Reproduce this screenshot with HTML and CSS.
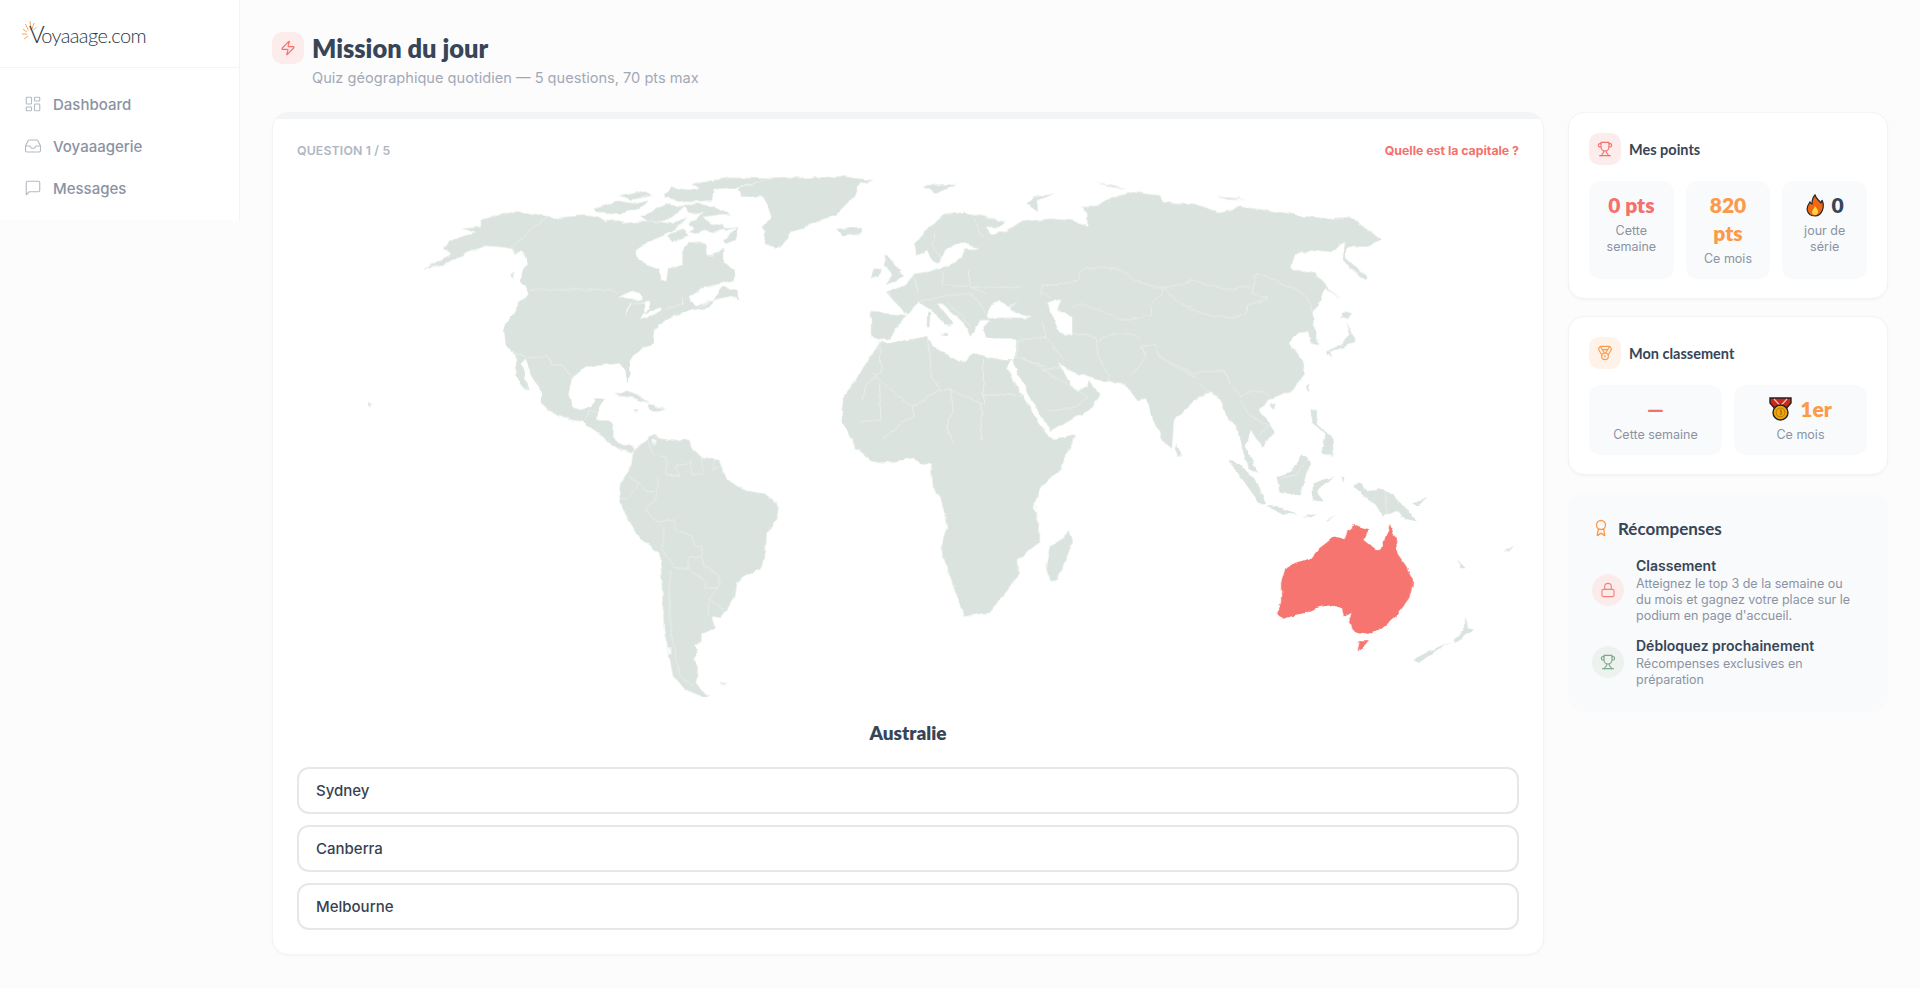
FILE: index.html
```html
<!DOCTYPE html>
<html lang="fr">
<head>
    <meta charset="UTF-8">
    <title>Mission du jour - Voyaaage.com</title>
    <link rel="stylesheet" href="styles.css">
</head>
<body>
    <aside class="sidebar">
        <div class="logo">
            <svg class="logo-sun" viewBox="0 0 16 22" fill="none" stroke="#f9a65a" stroke-width="1">
                <path d="M9 10 8 1M6.5 10.5 3.5 4M5 12 1 9M5 14H0M6 16l-4 3M10 9l2-6M11.5 10l3-3"/>
            </svg>
            <span class="logo-text"><span class="logo-v">V</span>oyaaage.com</span>
        </div>
        <nav class="nav">
            <a class="nav-item">
                <svg class="nav-icon" viewBox="0 0 24 24"><rect x="3" y="3" width="7" height="9" rx="1"/><rect x="14" y="3" width="7" height="5" rx="1"/><rect x="14" y="12" width="7" height="9" rx="1"/><rect x="3" y="16" width="7" height="5" rx="1"/></svg>
                Dashboard
            </a>
            <a class="nav-item">
                <svg class="nav-icon" viewBox="0 0 24 24"><polyline points="22 12 16 12 14 15 10 15 8 12 2 12"/><path d="M5.45 5.11 2 12v6a2 2 0 0 0 2 2h16a2 2 0 0 0 2-2v-6l-3.45-6.89A2 2 0 0 0 16.76 4H7.24a2 2 0 0 0-1.79 1.11z"/></svg>
                Voyaaagerie
            </a>
            <a class="nav-item">
                <svg class="nav-icon" viewBox="0 0 24 24"><path d="M21 15a2 2 0 0 1-2 2H7l-4 4V5a2 2 0 0 1 2-2h14a2 2 0 0 1 2 2z"/></svg>
                Messages
            </a>
        </nav>
    </aside>

    <main class="main">
        <header class="page-head">
            <div class="page-title">
                <span class="icon-box icon-red">
                    <svg class="icon" viewBox="0 0 24 24"><path d="M4 14a1 1 0 0 1-.78-1.63l9.9-10.2a.5.5 0 0 1 .86.46l-1.92 6.02A1 1 0 0 0 13 10h7a1 1 0 0 1 .78 1.63l-9.9 10.2a.5.5 0 0 1-.86-.46l1.92-6.02A1 1 0 0 0 11 14z"/></svg>
                </span>
                <h1>Mission du jour</h1>
            </div>
            <p class="subtitle">Quiz géographique quotidien — 5 questions, 70 pts max</p>
        </header>

        <div class="content">
            <section class="quiz-card">
                <div class="progress"></div>
                <div class="quiz-body">
                    <div class="quiz-top">
                        <span class="quiz-count">QUESTION 1 / 5</span>
                        <span class="quiz-ask">Quelle est la capitale ?</span>
                    </div>

                    <svg class="map" viewBox="296 170 1224 530">
                        <defs>
                            <filter id="coast" x="0" y="0" width="100%" height="100%" filterUnits="objectBoundingBox">
                                <feTurbulence type="fractalNoise" baseFrequency="0.11" numOctaves="2" seed="4"/>
                                <feDisplacementMap in="SourceGraphic" scale="4.5" xChannelSelector="R" yChannelSelector="G"/>
                            </filter>
                        </defs>
                        <g class="map-world">
                        <!-- Amerique du Nord -->
                        <g transform="translate(280 100) scale(.40816 .33333)">
                            <path class="land" d="M345 508 400 490 440 470 470 450 500 437 540 440 565 445 575 460 590 450 600 465 605 490 592 510 588 545 600 560 607 578 600 590 585 605 570 640 552 670 547 690 552 740 575 760 578 810 575 825 590 850 608 875 600 840 590 790 600 775 620 840 640 880 640 910 660 935 710 958 740 965 760 985 800 1020 830 1045 860 1060 865 1040 835 1035 815 1010 815 965 790 958 775 960 780 925 795 895 770 895 760 920 735 930 715 920 705 880 715 830 745 800 790 795 830 790 845 810 850 850 858 820 855 780 880 750 912 730 915 690 945 655 975 645 1010 630 1060 600 1015 618 1000 590 1030 565 1110 540 1115 522 1110 505 1085 485 1085 445 1060 465 1045 465 1040 430 1000 425 985 460 985 490 950 505 945 540 930 540 928 505 905 495 875 480 870 455 900 425 940 405 975 380 1000 350 960 370 930 365 905 365 870 365 830 370 800 365 780 350 745 345 700 350 670 355 655 347 580 333 540 343 490 358 490 380 445 385 475 398 440 410 410 425 400 445 420 460z"/>
                            <path class="land" d="M1125 378 1090 395 1080 370 1050 375 1035 350 1065 345 1105 345 1060 318 1020 310 985 315 1000 340 1040 335 1010 360 1000 375 1060 395z"/>
                            <path class="land" d="M1085 420 1125 378 1115 420 1090 430zM960 395 985 385 1000 405 960 425 950 410z"/>
                            <path class="land" d="M1060 600 1085 560 1120 570 1125 595 1095 590zM1010 630 1065 600 1050 622 1015 632z"/>
                            <path class="land" d="M770 325 830 302 870 310 900 300 880 325 830 340 775 335zM830 285 880 272 915 285 860 298zM955 262 1000 268 1065 262 1060 300 990 305 940 290zM1010 250 1100 232 1200 235 1120 262 1030 268zM800 362 840 360 830 372 805 370zM880 350 945 312 990 318 950 360 900 365zM1040 360 1060 375 1020 400 1000 395z"/>
                            <path class="land" d="M1120 265 1200 235 1290 232 1380 228 1455 240 1420 250 1405 290 1380 320 1360 345 1310 365 1280 385 1250 395 1230 435 1215 445 1190 430 1180 380 1205 345 1185 290 1130 285z"/>
                            <path class="land" d="M1365 385 1425 380 1425 400 1380 408z"/>
                            <path class="land" d="M815 885 850 872 880 890 905 910 860 892zM900 915 945 925 925 932 900 930zM865 928 880 930 870 935z"/>
                            <path class="land" d="M215 905 225 915 218 922zM565 520 575 515 570 535z"/>
                            <path class="sea" d="M825 595 860 572 880 578 885 600 860 598 840 590zM838 655 855 612 905 605 905 625 880 655 905 652 935 628 930 622 895 640 890 610 860 612 845 640zM1030 590 1058 590 1040 605z"/>
                            <path class="border" d="M610 568H815L825 580M655 347 565 440 575 455 600 465M575 760 615 775 655 770 665 795 690 795 715 835M745 965 755 935 780 935M770 985 785 958M985 590 985 610 940 630"/>
                        </g>

                        <!-- Amerique du Sud et Afrique australe -->
                        <g transform="translate(560 420) scale(.35714 .33333)">
                            <path class="land" d="M60 0 100 25 125 60 170 92 205 90 190 75 165 80 145 55 150 10 110 0z"/>
                            <path class="land" d="M205 90 245 55 262 42 275 55 320 62 360 62 370 85 400 115 445 120 465 175 490 195 520 212 565 220 605 245 613 275 605 305 578 345 575 400 560 450 510 470 495 490 490 530 460 580 450 595 425 590 435 620 395 642 395 665 375 680 385 690 370 720 385 745 380 790 395 810 420 828 400 832 350 810 315 770 305 710 290 630 285 520 280 400 220 355 165 250 170 190 190 155 200 120z"/>
                            <path class="land" d="M1425 330 1435 370 1395 480 1375 485 1362 445 1375 380 1410 355zM445 790 468 790 455 795z"/>
                            <path class="sea" d="M258 58 266 55 262 78zM1262 185 1280 190 1270 215 1255 210zM1236 225 1242 225 1250 285 1244 285zM1278 300 1285 300 1288 350 1282 350zM302 682 310 684 310 704 304 702z"/>
                            <path class="border" d="M275 170 270 230 240 270 270 310 320 300 320 325 370 350 375 375 395 380 400 440 440 465 445 490 415 540 460 570M245 60 255 100 295 115 295 160 330 170 325 140 365 125 370 165 400 160 395 115M430 120 425 155 450 135M190 170 220 190 190 235 170 240M220 190 240 215 270 215M290 320 285 390 320 445 355 445 360 415 395 412M355 445 405 485 405 505 440 505M310 450 305 510 310 640 335 770 375 800M415 540 415 585"/>
                            <path class="border" d="M1105 150 1130 130 1210 125 1250 140 1240 205 1240 260 1235 340 1180 315 1160 270 1115 275 1100 245M1070 255 1110 255 1165 315 1160 360 1170 390 1065 385M1130 395 1195 395M1150 400 1140 510 1190 485 1225 445 1195 395M1100 515 1135 525 1140 495M1285 200 1330 240 1340 310 1285 325 1240 300M1285 200 1290 130 1350 140 1350 200M1290 130 1270 90 1300 40 1360 30M1285 325 1295 380 1240 365M1160 360 1210 385 1270 350M1200 395 1220 440 1260 440 1265 380M1205 535 1222 525 1212 545zM1242 490 1252 490 1248 505zM990 30 1085 30 1090 70 1040 125 1000 110 975 110 975 50M920 60 920 125M950 55 955 110M965 55 970 110M870 65 880 130M1045 160 1090 160 1085 210 1105 210 1095 245M1165 40 1190 85 1270 75 1280 40"/>
                        </g>

                        <!-- Afrique -->
                        <path class="land" d="M880 342 868 360 843 397 841 420 855 447 874 463 892 462 914 458 921 463 931 465 933 487 942 503 947 527 940 548 949 573 958 600 964 617 989 613 1006 593 1019 575 1017 560 1039 543 1039 523 1033 507 1042 487 1060 470 1074 440 1076 434 1053 440 1046 433 1027 403 1007 367 1014 360 1003 360 973 353 964 362 934 347 927 336 895 342z"/>

                        <!-- Eurasie -->
                        <g transform="translate(860 170) scale(.43367 .33333)">
                            <path class="land" d="M25 425 110 435 80 395 60 365 105 345 125 310 155 305 180 295 205 285 235 265 240 235 275 235 232 215 200 235 180 280 165 270 155 240 130 255 125 215 150 180 190 135 240 125 290 140 335 155 325 170 290 170 300 190 335 185 370 155 440 145 490 150 525 170 525 130 510 110 545 110 575 85 630 65 690 75 700 95 770 100 830 125 880 110 970 125 1010 135 1080 145 1130 140 1180 185 1205 210 1170 230 1125 230 1120 260 1170 320 1165 330 1130 290 1115 265 1120 215 1085 245 1060 240 1005 250 995 295 1050 310 1075 345 1060 400 1045 430 1050 480 1060 525 1040 520 1035 480 1010 490 990 520 1025 570 1025 610 1000 660 960 680 945 690 920 720 958 785 930 830 900 780 890 830 920 910 900 900 880 830 870 770 850 745 830 690 810 665 785 680 755 715 725 750 720 840 700 810 680 760 660 685 640 690 610 640 570 635 535 625 490 605 460 580 485 640 500 665 525 650 528 630 555 675 530 720 500 740 440 785 425 750 400 700 360 600 355 570 362 505 290 505 285 470 300 450 275 450 255 500 240 460 190 400 180 400 215 460 200 465 170 425 135 395 100 445 70 505 45 510 25 495z"/>
                            <path class="land" d="M60 255 75 270 100 320 60 345 75 310 55 290zM30 300 50 295 45 320 25 325zM1115 430 1140 425 1125 445 1110 440zM1120 455 1145 510 1120 530 1085 545 1090 565 1075 545 1115 520 1130 490zM730 820 742 850 735 862 727 840zM1030 650 1040 640 1035 670zM945 705 960 700 955 720zM1040 720 1055 720 1055 760 1090 800 1095 860 1065 850 1075 790 1045 760zM1050 305 1108 390 1070 345zM155 425 162 425 160 470 154 470zM185 490 205 488 200 500zM145 45 225 40 175 70zM385 100 400 80 450 70 410 90 410 125zM545 35 620 55 580 50zM825 78 895 88 850 88z"/>
                            <path class="sea" d="M295 445 300 410 320 390 345 410 370 388 345 415 395 445 340 442zM430 400 465 385 455 420 490 440 490 495 460 490 450 450zM340 585 360 605 355 570z"/>
                            <path class="border" d="M420 345 500 335 510 300 560 290 605 300 640 335 700 355 770 330 855 360 910 345 915 310 960 330 1030 375 1040 400 1045 430M700 355 740 400 790 430 860 445 890 430 895 405 940 385 905 370 910 345M420 345 420 370 440 385M490 410 510 400 570 430 600 450 675 435 670 405 695 375 700 355M490 490 545 500 550 560 575 620 570 635M420 450 430 500 470 570M630 610 660 560 650 530 680 520 690 560 770 610 840 600 855 640 880 680 915 660 950 680M550 510 590 490 630 490 650 510M710 580 775 620M780 640 810 670M880 690 895 730 940 770 920 800"/>
                            <path class="border" d="M175 180 165 225 190 270M260 140 285 205M250 300 255 350 370 350M135 370 125 320M190 300 190 345 250 345M135 395 185 380 250 370 280 400 295 440M200 400 240 440 255 470M255 350 290 370M430 500 365 510 360 560 430 590M375 560 525 680 500 710 435 725M420 600 465 590"/>
                            <path class="border" d="M155 498 165 620 185 658 120 710 25 610M285 565 285 700M285 675 380 675M210 660 215 720 200 770 215 820M185 658 210 660 280 700 280 810M120 710 125 740 95 760 50 810M45 640 48 750 0 755"/>
                        </g>
                        <path class="border" d="M880 343 881 372 866 385 862 400"/>

                        <!-- Oceanie -->
                        <g transform="translate(1200 440) scale(.33333)">
                            <path class="land" d="M88 62 120 70 175 130 200 190 180 190 130 120zM195 195 250 205 295 225 245 220zM232 110 275 95 310 45 335 65 320 105 300 170 240 155zM340 130 400 110 355 150 375 185 340 185zM460 135 490 130 505 155 540 145 580 165 620 205 655 248 620 240 590 215 550 230 530 195 490 165zM795 530 805 565 825 570 770 610 760 605 795 570zM755 605 700 640 660 670 640 660 690 635zM775 360 800 385 785 385zM915 335 945 318 930 335zM380 240 415 222 385 242zM310 228 355 222 335 232zM640 195 685 170 665 195zM425 105 435 110 432 130z"/>
                            <path class="border" d="M562 158V228M240 115 290 105 315 75"/>
                            <path class="target" d="M465 255 510 268 495 300 535 332 550 320 572 252 590 300 595 345 620 380 643 425 630 475 590 530 550 565 505 583 480 578 460 570 450 535 460 515 430 530 425 505 400 495 350 505 320 520 290 525 255 537 232 525 245 490 245 430 258 385 290 368 335 355 360 325 405 290 435 298 445 270z"/>
                            <path class="target" d="M478 605 512 605 490 630 472 637z"/>
                        </g>
                        </g>
                    </svg>

                    <h2 class="place">Australie</h2>
                    <div class="options">
                        <button class="option">Sydney</button>
                        <button class="option">Canberra</button>
                        <button class="option">Melbourne</button>
                    </div>
                </div>
            </section>

            <div class="side">
                <section class="panel">
                    <div class="panel-head">
                        <span class="icon-box icon-red">
                            <svg class="icon" viewBox="0 0 24 24"><path d="M6 9H4.5a2.5 2.5 0 0 1 0-5H6"/><path d="M18 9h1.5a2.5 2.5 0 0 0 0-5H18"/><path d="M4 22h16"/><path d="M10 14.66V17c0 .55-.47.98-.97 1.21C7.85 18.75 7 20.24 7 22"/><path d="M14 14.66V17c0 .55.47.98.97 1.21C16.15 18.75 17 20.24 17 22"/><path d="M18 2H6v7a6 6 0 0 0 12 0V2Z"/></svg>
                        </span>
                        <h3>Mes points</h3>
                    </div>
                    <div class="stats stats-3">
                        <div class="stat">
                            <div class="stat-value red">0 pts</div>
                            <div class="stat-label">Cette semaine</div>
                        </div>
                        <div class="stat">
                            <div class="stat-value orange">820 pts</div>
                            <div class="stat-label">Ce mois</div>
                        </div>
                        <div class="stat">
                            <div class="stat-value dark">
                                <svg class="emoji-fire" viewBox="0 0 18 23"><path d="M9 1C10 5 13 6 15 9 15.5 8 16 7 16 6 17.5 9 17.5 13 16.5 16 15 20 12 22 9 22 5 22 2 20 1.2 16 .5 12 3 10 4 8 4.5 9 5 10 6 10 6 7 6 4 9 1Z" fill="#f5670f" stroke="#25262b" stroke-width="1.2"/><path d="M9 12C10 14 12 15 12 18 12 20 10.5 21 9 21 7.5 21 6 20 6 18 6 16 8 15 9 12Z" fill="#ffd54a"/></svg>
                                0
                            </div>
                            <div class="stat-label">jour de série</div>
                        </div>
                    </div>
                </section>

                <section class="panel">
                    <div class="panel-head">
                        <span class="icon-box icon-orange">
                            <svg class="icon" viewBox="0 0 24 24"><path d="M7.21 15 2.66 7.14a2 2 0 0 1 .13-2.2L4.4 2.8A2 2 0 0 1 6 2h12a2 2 0 0 1 1.6.8l1.6 2.14a2 2 0 0 1 .14 2.2L16.79 15"/><path d="M11 12 5.12 2.2"/><path d="m13 12 5.88-9.8"/><path d="M8 7h8"/><circle cx="12" cy="17" r="5"/><path d="M12 18v-2h-.5"/></svg>
                        </span>
                        <h3>Mon classement</h3>
                    </div>
                    <div class="stats stats-2">
                        <div class="stat stat-rank">
                            <div class="stat-value red">—</div>
                            <div class="stat-label">Cette semaine</div>
                        </div>
                        <div class="stat stat-rank">
                            <div class="stat-value orange">
                                <svg class="emoji-medal" viewBox="0 0 23 24"><path d="M1 1H22V6L15 14H8L1 6Z" fill="#c9281e" stroke="#222" stroke-width="1.4"/><path d="M5 2 11.5 9 18 2" fill="none" stroke="#f3c3a8" stroke-width="1.2"/><circle cx="11.5" cy="15.5" r="7.5" fill="#eea40c" stroke="#222" stroke-width="1.4"/><circle cx="11.5" cy="15.5" r="4.4" fill="none" stroke="#b97a06"/><path d="M11 13.5 12 13V18" fill="none" stroke="#8a5a04"/></svg>
                                1er
                            </div>
                            <div class="stat-label">Ce mois</div>
                        </div>
                    </div>
                </section>

                <section class="rewards">
                    <div class="rewards-head">
                        <svg class="icon-award" viewBox="0 0 24 24"><path d="m15.477 12.89 1.515 8.526a.5.5 0 0 1-.81.47l-3.58-2.687a1 1 0 0 0-1.197 0l-3.586 2.686a.5.5 0 0 1-.81-.469l1.514-8.526"/><circle cx="12" cy="8" r="6"/></svg>
                        <h3>Récompenses</h3>
                    </div>
                    <div class="reward">
                        <span class="reward-icon reward-red">
                            <svg class="icon" viewBox="0 0 24 24"><rect x="3" y="11" width="18" height="11" rx="2"/><path d="M7 11V7a5 5 0 0 1 10 0v4"/></svg>
                        </span>
                        <div class="reward-text">
                            <h4>Classement</h4>
                            <p>Atteignez le top 3 de la semaine ou du mois et gagnez votre place sur le podium en page d'accueil.</p>
                        </div>
                    </div>
                    <div class="reward">
                        <span class="reward-icon reward-green">
                            <svg class="icon" viewBox="0 0 24 24"><path d="M6 9H4.5a2.5 2.5 0 0 1 0-5H6"/><path d="M18 9h1.5a2.5 2.5 0 0 0 0-5H18"/><path d="M4 22h16"/><path d="M10 14.66V17c0 .55-.47.98-.97 1.21C7.85 18.75 7 20.24 7 22"/><path d="M14 14.66V17c0 .55.47.98.97 1.21C16.15 18.75 17 20.24 17 22"/><path d="M18 2H6v7a6 6 0 0 0 12 0V2Z"/></svg>
                        </span>
                        <div class="reward-text">
                            <h4>Débloquez prochainement</h4>
                            <p>Récompenses exclusives en préparation</p>
                        </div>
                    </div>
                </section>
            </div>
        </div>
    </main>
</body>
</html>
```

FILE: styles.css
```css
* {
    box-sizing: border-box;
}

body {
    margin: 0;
    min-height: 988px;
    display: flex;
    align-items: flex-start;
    background: #fcfcfd;
    color: #374151;
    font-family: Inter, "Noto Sans", sans-serif;
}

h1, h2, h3, h4, p {
    margin: 0;
}

/* Sidebar */
.sidebar {
    width: 240px;
    height: 220px;
    flex-shrink: 0;
    background: #fff;
    border-right: 1px solid #f3f4f6;
}

.logo {
    height: 68px;
    display: flex;
    align-items: center;
    padding-left: 22px;
    border-bottom: 1px solid #f3f4f6;
}

.logo-sun {
    width: 16px;
    height: 22px;
    margin-right: -9px;
    margin-top: -6px;
}

.logo-text {
    font-family: Lato, sans-serif;
    font-weight: 300;
    font-size: 20px;
    letter-spacing: -0.6px;
    color: #2b3645;
}

.logo-v {
    font-size: 24px;
    margin-right: -3px;
}

.nav {
    padding-top: 15px;
}

.nav-item {
    height: 42px;
    display: flex;
    align-items: center;
    gap: 11px;
    padding-left: 24px;
    font-size: 15px;
    font-weight: 500;
    color: #8b93a3;
}

.nav-icon {
    width: 18px;
    height: 18px;
    fill: none;
    stroke: #b4bbc5;
    stroke-width: 1.5;
    stroke-linecap: round;
    stroke-linejoin: round;
}

/* Main */
.main {
    flex: 1;
    padding: 32px;
}

.page-title {
    display: flex;
    align-items: center;
    gap: 8px;
}

h1 {
    font-family: Lato, sans-serif;
    font-size: 25.4px;
    font-weight: 800;
    line-height: 32px;
    color: #374557;
}

.subtitle {
    margin: 4px 0 23px 40px;
    font-size: 14.6px;
    line-height: 21px;
    color: #a2a9b5;
}

.icon-box {
    width: 32px;
    height: 32px;
    flex-shrink: 0;
    display: flex;
    align-items: center;
    justify-content: center;
    border-radius: 10px;
}

.icon {
    width: 16px;
    height: 16px;
    fill: none;
    stroke: currentColor;
    stroke-width: 1.7;
    stroke-linecap: round;
    stroke-linejoin: round;
}

.icon-red {
    background: #fdecec;
    color: #f4716b;
}

.icon-orange {
    background: #fff3e9;
    color: #fb9a4b;
}

.content {
    display: flex;
    align-items: flex-start;
    gap: 24px;
}

/* Quiz */
.quiz-card {
    flex: 1;
    overflow: hidden;
    background: #fff;
    border: 1px solid #f3f4f6;
    border-radius: 16px;
    box-shadow: 0 1px 3px rgba(0, 0, 0, 0.03);
}

.progress {
    height: 6px;
    background: #f3f4f6;
}

.quiz-body {
    padding: 24px 24px 24px;
}

.quiz-top {
    display: flex;
    justify-content: space-between;
    line-height: 16px;
    font-size: 12.3px;
}

.quiz-count {
    font-weight: 600;
    letter-spacing: 0.15px;
    color: #b0b7c3;
}

.quiz-ask {
    font-weight: 700;
    color: #f4716b;
}

.map {
    display: block;
    width: 100%;
    height: 530px;
    margin-top: 11px;
}

.map-world {
    filter: url(#coast);
}

.land {
    fill: #dbe3df;
}

.sea {
    fill: #fff;
}

.border {
    fill: none;
    stroke: #eef2ef;
    stroke-width: 0.8;
    vector-effect: non-scaling-stroke;
}

.target {
    fill: #f6756f;
}

.place {
    margin: 21px 0 22px;
    text-align: center;
    font-family: Lato, sans-serif;
    font-size: 19px;
    font-weight: 800;
    line-height: 24px;
    color: #374557;
}

.options {
    display: flex;
    flex-direction: column;
    gap: 11px;
}

.option {
    height: 47px;
    padding: 0 17px;
    text-align: left;
    background: #fff;
    border: 2px solid #e5e7eb;
    border-radius: 12px;
    font-family: inherit;
    font-size: 15px;
    font-weight: 500;
    color: #374151;
}

/* Right column */
.side {
    width: 320px;
    flex-shrink: 0;
    display: flex;
    flex-direction: column;
    gap: 17px;
}

.panel {
    padding: 20px 20px 19px;
    background: #fff;
    border: 1px solid #f3f4f6;
    border-radius: 16px;
    box-shadow: 0 1px 3px rgba(0, 0, 0, 0.04);
}

.panel-head {
    display: flex;
    align-items: center;
    gap: 8px;
    margin-bottom: 16px;
}

.panel-head h3 {
    font-family: Lato, sans-serif;
    font-size: 14.5px;
    font-weight: 700;
    color: #374557;
}

.stats {
    display: grid;
    gap: 12px;
}

.stats-3 {
    grid-template-columns: repeat(3, 1fr);
}

.stats-2 {
    grid-template-columns: repeat(2, 1fr);
}

.stat {
    padding: 10px 8px 12px;
    min-height: 98px;
    text-align: center;
    background: #f9fafb;
    border-radius: 12px;
}

.stat-rank {
    min-height: 70px;
}

.stat-value {
    display: flex;
    flex-wrap: wrap;
    align-items: center;
    justify-content: center;
    gap: 0 8px;
    font-family: Lato, sans-serif;
    font-size: 21px;
    font-weight: 800;
    line-height: 28px;
}

.stat:nth-child(2) .stat-value {
    padding: 0 10px;
}

.red {
    color: #f4716b;
}

.orange {
    color: #fb9a4b;
}

.dark {
    color: #374557;
}

.stat-label {
    margin-top: 4px;
    font-size: 12.5px;
    line-height: 16px;
    color: #8b93a3;
}

.emoji-fire {
    width: 18px;
    height: 23px;
}

.emoji-medal {
    width: 23px;
    height: 24px;
}

/* Rewards */
.rewards {
    padding: 24px;
    background: #f9fafb;
    border-radius: 16px;
}

.rewards-head {
    height: 24px;
    display: flex;
    align-items: center;
    gap: 8px;
    margin-bottom: 16px;
}

.rewards-head h3 {
    font-family: Lato, sans-serif;
    font-size: 17px;
    font-weight: 700;
    color: #374557;
}

.icon-award {
    width: 18px;
    height: 18px;
    fill: none;
    stroke: #fb9a4b;
    stroke-width: 1.8;
    stroke-linecap: round;
    stroke-linejoin: round;
}

.reward {
    display: flex;
    align-items: center;
    gap: 12px;
    margin-bottom: 12px;
}

.reward:last-child {
    margin-bottom: 0;
}

.reward-icon {
    width: 32px;
    height: 32px;
    flex-shrink: 0;
    display: flex;
    align-items: center;
    justify-content: center;
    border-radius: 50%;
}

.reward-red {
    background: #fbeceb;
    color: #f4827d;
}

.reward-green {
    background: #edf2ef;
    color: #7fa98f;
}

.reward-text {
    max-width: 222px;
}

.reward-text h4 {
    font-size: 14px;
    font-weight: 600;
    line-height: 20px;
    color: #374557;
}

.reward-text p {
    font-size: 12.5px;
    line-height: 16px;
    color: #8b93a3;
}
```
